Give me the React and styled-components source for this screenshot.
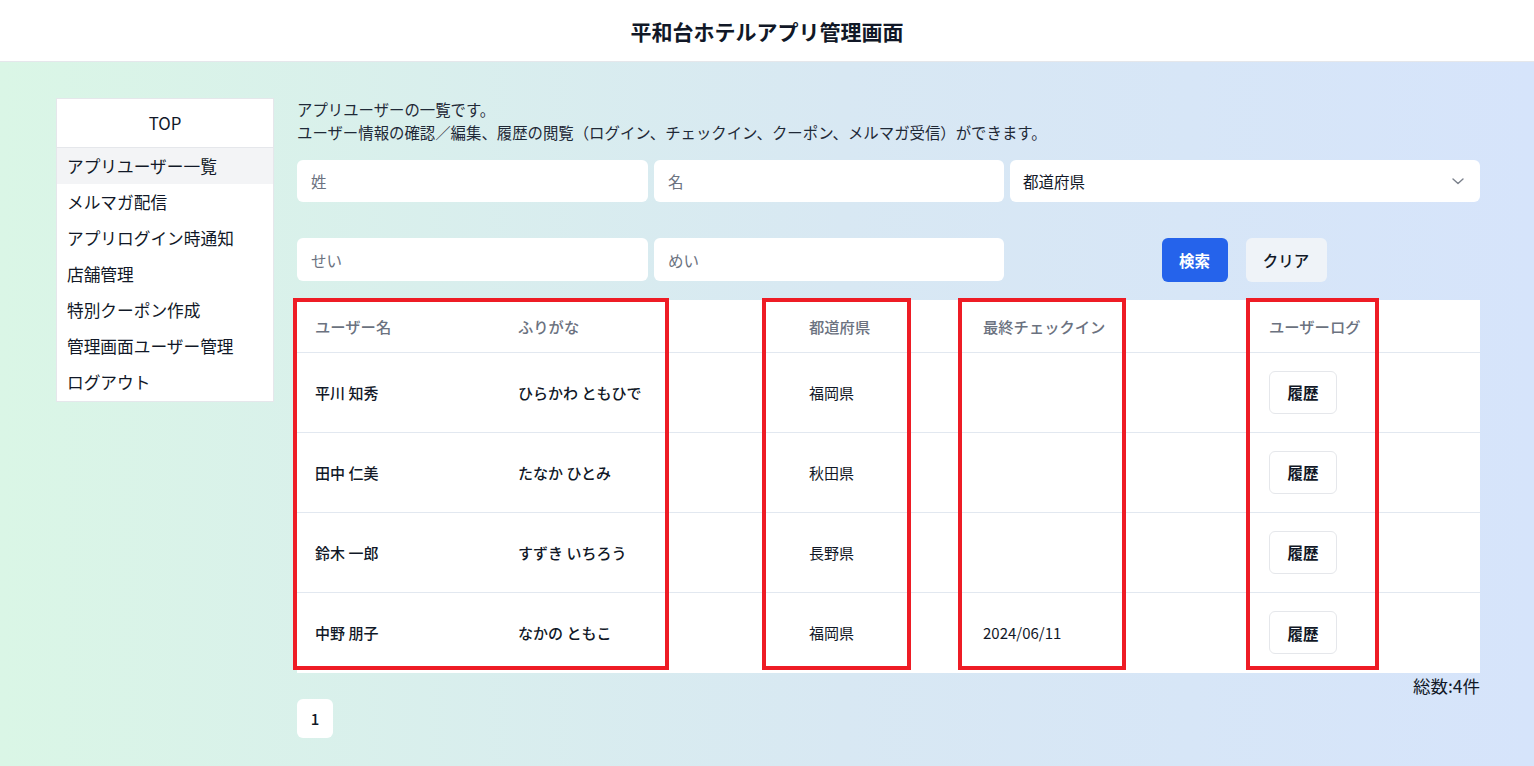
import React from 'react';
import styled, { createGlobalStyle } from 'styled-components';

const GlobalStyle = createGlobalStyle`
    html, body {
        margin: 0;
        padding: 0;
    }
    body {
        font-family: "Noto Sans CJK JP", "Noto Sans", sans-serif;
        color: #111827;
        background: #ffffff;
    }
    * {
        box-sizing: border-box;
    }
`;

const users = [
    { name: '平川 知秀', kana: 'ひらかわ ともひで', pref: '福岡県', checkin: '' },
    { name: '田中 仁美', kana: 'たなか ひとみ', pref: '秋田県', checkin: '' },
    { name: '鈴木 一郎', kana: 'すずき いちろう', pref: '長野県', checkin: '' },
    { name: '中野 朋子', kana: 'なかの ともこ', pref: '福岡県', checkin: '2024/06/11' },
];

const menu = [
    'アプリユーザー一覧',
    'メルマガ配信',
    'アプリログイン時通知',
    '店舗管理',
    '特別クーポン作成',
    '管理画面ユーザー管理',
    'ログアウト',
];

// 注釈の赤枠（テーブル左上からの位置）
const marks = [
    { left: -4, width: 376 },
    { left: 465, width: 149 },
    { left: 661, width: 168 },
    { left: 949, width: 133 },
];

const ChevronDown = () => (
    <svg width="12" height="7" viewBox="0 0 12 7" fill="none" stroke="#7b818c" strokeWidth="1.4" strokeLinecap="round" strokeLinejoin="round">
        <path d="M1 1l5 4.6L11 1" />
    </svg>
);

const App = () => {
    return (
        <>
            <GlobalStyle />
            <Header>
                <HeaderTitle>平和台ホテルアプリ管理画面</HeaderTitle>
            </Header>
            <Page>
                <Sidebar>
                    <SidebarTop>TOP</SidebarTop>
                    {menu.map((item, i) => (
                        <MenuItem key={item} $active={i === 0}>{item}</MenuItem>
                    ))}
                </Sidebar>
                <Main>
                    <Description>
                        アプリユーザーの一覧です。<br />
                        ユーザー情報の確認／編集、履歴の閲覧（ログイン、チェックイン、クーポン、メルマガ受信）ができます。
                    </Description>
                    <SearchGrid>
                        <TextInput placeholder="姓" />
                        <TextInput placeholder="名" />
                        <SelectBox>
                            <span>都道府県</span>
                            <ChevronDown />
                        </SelectBox>
                        <TextInput placeholder="せい" />
                        <TextInput placeholder="めい" />
                        <ButtonCell>
                            <PrimaryButton>検索</PrimaryButton>
                            <SubButton>クリア</SubButton>
                        </ButtonCell>
                    </SearchGrid>
                    <TableWrap>
                        <Table>
                            <colgroup>
                                <col style={{ width: 203 }} />
                                <col style={{ width: 291 }} />
                                <col style={{ width: 174 }} />
                                <col style={{ width: 286 }} />
                                <col style={{ width: 229 }} />
                            </colgroup>
                            <thead>
                                <tr>
                                    <Th>ユーザー名</Th>
                                    <Th>ふりがな</Th>
                                    <Th>都道府県</Th>
                                    <Th>最終チェックイン</Th>
                                    <Th>ユーザーログ</Th>
                                </tr>
                            </thead>
                            <tbody>
                                {users.map((u) => (
                                    <Row key={u.name}>
                                        <Td $strong>{u.name}</Td>
                                        <Td $strong>{u.kana}</Td>
                                        <Td>{u.pref}</Td>
                                        <Td>{u.checkin}</Td>
                                        <Td>
                                            <HistoryButton>履歴</HistoryButton>
                                        </Td>
                                    </Row>
                                ))}
                            </tbody>
                        </Table>
                        {marks.map((m) => (
                            <Mark key={m.left} style={{ left: m.left, width: m.width }} />
                        ))}
                    </TableWrap>
                    <Total>総数:4件</Total>
                    <Pager>
                        <PageButton>1</PageButton>
                    </Pager>
                </Main>
            </Page>
        </>
    );
};

export default App;

const Header = styled.header`
    height: 62px;
    display: flex;
    align-items: center;
    justify-content: center;
    background: #ffffff;
    border-bottom: 1px solid #e5e7eb;
`

const HeaderTitle = styled.h1`
    margin: 0;
    font-size: 21px;
    font-weight: 700;
    color: #111827;
`

const Page = styled.div`
    display: flex;
    align-items: flex-start;
    gap: 23px;
    min-height: 704px;
    padding: 36px 54px 28px 56px;
    background: linear-gradient(to right, #daf6e6, #d8e8f3 55%, #d6e4fb);
`

const Sidebar = styled.nav`
    width: 218px;
    flex-shrink: 0;
    background: #ffffff;
    border: 1px solid #e5e7eb;
    padding-bottom: 1px;
`

const SidebarTop = styled.div`
    height: 49px;
    display: flex;
    align-items: center;
    justify-content: center;
    font-size: 16.8px;
    border-bottom: 1px solid #e5e7eb;
`

const MenuItem = styled.div`
    height: 36px;
    display: flex;
    align-items: center;
    padding-left: 10px;
    font-size: 16.7px;
    color: #111827;
    background: ${(p) => (p.$active ? '#f3f4f6' : 'transparent')};
`

const Main = styled.main`
    flex: 1;
    display: flex;
    flex-direction: column;
`

const Description = styled.p`
    margin: 0 0 16px;
    font-size: 15.4px;
    line-height: 23px;
    color: #1f2937;
`

const SearchGrid = styled.div`
    display: grid;
    grid-template-columns: 351px 350px 1fr;
    grid-template-rows: 42px 43px;
    column-gap: 6px;
    row-gap: 36px;
    margin-bottom: 19px;
`

const TextInput = styled.input`
    border: none;
    border-radius: 6px;
    background: #ffffff;
    padding: 0 14px;
    font-family: inherit;
    font-size: 15.5px;
    color: #111827;
    outline: none;

    &::placeholder {
        color: #6b7280;
    }
`

const SelectBox = styled.div`
    display: flex;
    align-items: center;
    justify-content: space-between;
    border-radius: 6px;
    background: #ffffff;
    padding: 0 16px 0 13px;
    font-size: 15.5px;
    color: #111827;
`

const ButtonCell = styled.div`
    display: flex;
    align-items: center;
    justify-content: center;
    gap: 18px;
    padding-right: 2px;
`

const PrimaryButton = styled.button`
    width: 66px;
    height: 44px;
    border: none;
    border-radius: 6px;
    background: #2563eb;
    color: #ffffff;
    font-family: inherit;
    font-size: 15.5px;
    font-weight: 700;
`

const SubButton = styled.button`
    width: 81px;
    height: 44px;
    border: none;
    border-radius: 6px;
    background: #eff3f8;
    color: #111827;
    font-family: inherit;
    font-size: 15.5px;
    font-weight: 500;
`

const TableWrap = styled.div`
    position: relative;
    background: #ffffff;
`

const Table = styled.table`
    width: 100%;
    border-collapse: collapse;
    table-layout: fixed;
`

const Th = styled.th`
    height: 52px;
    padding: 0 18px;
    text-align: left;
    font-size: 15.3px;
    font-weight: 500;
    color: #6b7280;
    border-bottom: 1px solid #e2e8f0;
`

const Row = styled.tr`
    height: 80px;
    border-bottom: 1px solid #e2e8f0;

    &:last-child {
        border-bottom: none;
        height: 81px;
    }
`

const Td = styled.td`
    padding: 0 18px;
    font-size: 15px;
    font-weight: ${(p) => (p.$strong ? 500 : 400)};
    color: #111827;
`

const HistoryButton = styled.button`
    width: 68px;
    height: 43px;
    border: 1px solid #e5e7eb;
    border-radius: 6px;
    background: #ffffff;
    font-family: inherit;
    font-size: 15.5px;
    font-weight: 700;
    color: #111827;
`

const Mark = styled.div`
    position: absolute;
    top: -2px;
    height: 372px;
    border: 4px solid #ee1c25;
    pointer-events: none;
`

const Total = styled.div`
    text-align: right;
    font-size: 17.5px;
    line-height: 26px;
    color: #111827;
`

const Pager = styled.div`
    display: flex;
`

const PageButton = styled.button`
    width: 36px;
    height: 39px;
    border: none;
    border-radius: 6px;
    background: #ffffff;
    font-family: inherit;
    font-size: 15px;
    font-weight: 500;
    color: #111827;
`
